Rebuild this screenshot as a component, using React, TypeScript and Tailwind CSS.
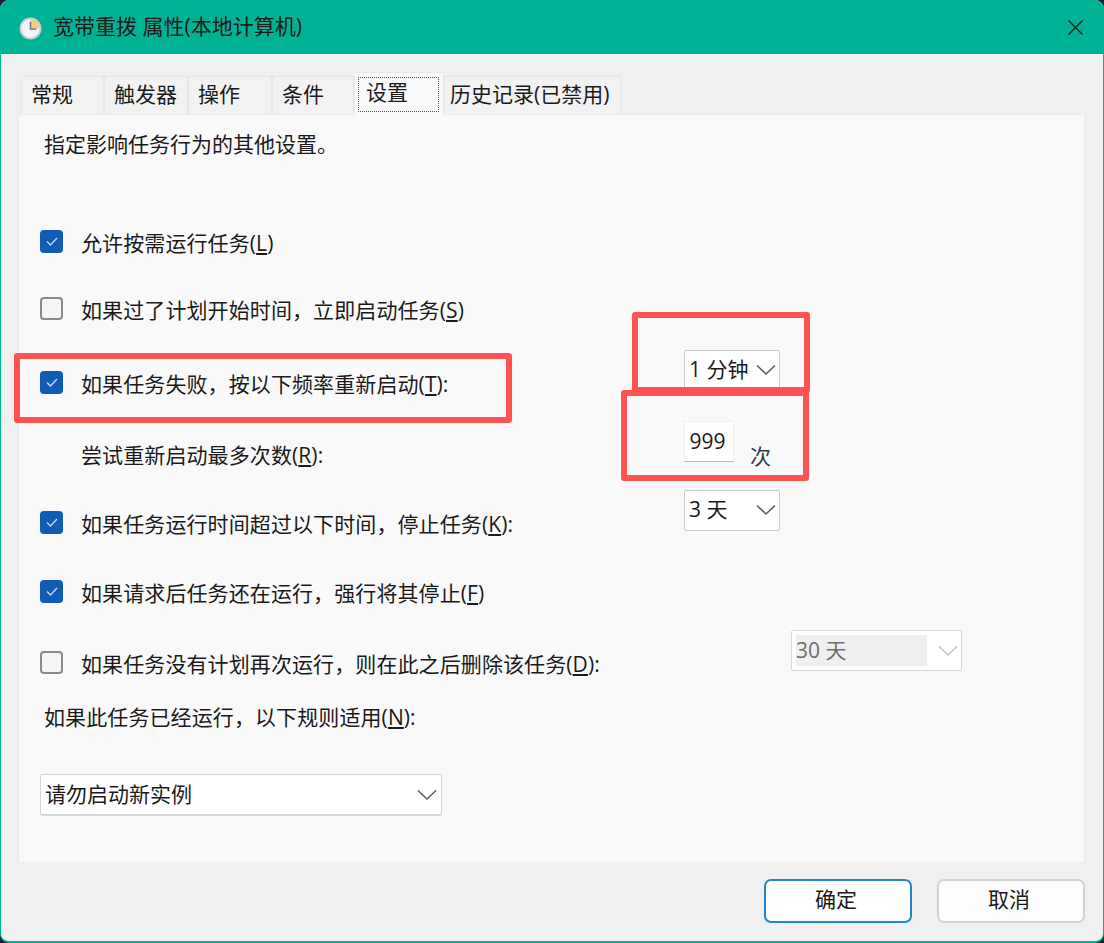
const uiFont = { fontFamily: '"Open Sans","Noto Sans CJK SC",sans-serif' };

const tabs = [
  { label: "常规", width: "w-[83px]" },
  { label: "触发器", width: "w-[84px]" },
  { label: "操作", width: "w-[84px]" },
  { label: "条件", width: "w-[82px]" },
];

function Chevron({ className = "stroke-[#5f5f5f]" }: { className?: string }) {
  return (
    <svg width="20" height="12" viewBox="0 0 20 12" fill="none" className={className} strokeWidth="1.6">
      <path d="M1 1.5 L10 10 L19 1.5" />
    </svg>
  );
}

function CheckBox({ checked }: { checked?: boolean }) {
  return checked ? (
    <span className="flex h-[23px] w-[23px] shrink-0 items-center justify-center rounded-[4px] bg-[#0f5cb4] mb-[6px]">
      <svg width="12" height="9" viewBox="0 0 12 9" fill="none" stroke="#c9daf0" strokeWidth="1.4">
        <path d="M1 4.5 L4.5 8 L11 1" />
      </svg>
    </span>
  ) : (
    <span className="h-[23px] w-[23px] shrink-0 rounded-[4px] border-2 border-[#8a8a8a] bg-[#f5f5f5] mb-[6px]" />
  );
}

function OptionRow({ checked, top, children }: { checked?: boolean; top: string; children: React.ReactNode }) {
  return (
    <div className={`flex h-[40px] items-center gap-[18px] ${top}`}>
      <CheckBox checked={checked} />
      <span className="whitespace-nowrap text-[21px] tracking-[0.1px]">{children}</span>
    </div>
  );
}

function Select({ label, width }: { label: string; width: string }) {
  return (
    <div className={`flex h-[41px] items-center justify-between rounded-[2px] border border-[#c9c9c9] bg-white pb-[1px] pl-[4px] pr-[3px] text-[21px] ${width}`}>
      <span className="whitespace-nowrap">{label}</span>
      <Chevron />
    </div>
  );
}

export default function App() {
  return (
    <div className="h-[943px] w-[1104px] overflow-hidden bg-[#1d2030] text-[#1a1a1a]" style={uiFont}>
      <div className="flex h-full flex-col overflow-hidden rounded-[9px] border-x border-b-2 border-[#00b294] bg-[#f0f0f0]">
        {/* Title bar */}
        <div className="flex h-[54px] shrink-0 items-center bg-[#00b294] pl-[18px] pr-[20px]">
          <svg className="mt-[3px]" width="23" height="23" viewBox="0 0 22 22">
            <circle cx="11" cy="11" r="10.5" fill="#c8ccd2" />
            <circle cx="11" cy="11" r="8.8" fill="#f1f3f6" />
            <path d="M11 2.2 A8.8 8.8 0 0 1 19.8 11 H11 Z" fill="#f2cf7c" />
            <path d="M11 4.5 V11.5 H16.5" fill="none" stroke="#6f7780" strokeWidth="1.5" />
          </svg>
          <span className="ml-[11px] whitespace-nowrap text-[21px]">宽带重拨 属性(本地计算机)</span>
          <svg className="ml-auto" width="15" height="15" viewBox="0 0 15 15" fill="none" stroke="#10201c" strokeWidth="1.4">
            <path d="M0.5 0.5 L14.5 14.5 M14.5 0.5 L0.5 14.5" />
          </svg>
        </div>

        {/* Tabs */}
        <div className="flex h-[60px] shrink-0 items-end pl-[20px]">
          {tabs.map((t) => (
            <div key={t.label} className={`flex h-[38px] items-center border-x border-t border-[#e6e6e6] bg-[#f2f2f2] pb-[2px] pl-[9px] text-[21px] ${t.width}`}>
              {t.label}
            </div>
          ))}
          <div className="relative z-10 -mb-[2px] flex h-[44px] w-[90px] items-start border-x border-t border-[#ebebeb] bg-[#f9f9f9] px-[3px] pt-[4px]">
            <span className="flex h-[35px] w-[81px] border border-dotted border-[#555] pl-[7px] text-[21px] leading-[28px]">设置</span>
          </div>
          <div className="flex h-[38px] w-[177px] items-center whitespace-nowrap border-x border-t border-[#e6e6e6] bg-[#f2f2f2] pb-[2px] pl-[5px] text-[21px]">
            历史记录(已禁用)
          </div>
        </div>

        {/* Settings panel */}
        <div className="relative ml-[17px] mr-[18px] flex h-[749px] shrink-0 border border-[#ebebeb] bg-[#f9f9f9]">
          <div className="w-[665px] shrink-0 pl-[21px]">
            <div className="mt-[10px] flex h-[40px] items-center pl-[4px] text-[21px]">指定影响任务行为的其他设置。</div>
            <OptionRow checked top="mt-[59px]">允许按需运行任务(<u>L</u>)</OptionRow>
            <OptionRow top="mt-[27px]">如果过了计划开始时间，立即启动任务(<u>S</u>)</OptionRow>
            <OptionRow checked top="mt-[34px]">如果任务失败，按以下频率重新启动(<u>T</u>):</OptionRow>
            <div className="mt-[31px] flex h-[40px] items-center pl-[41px] text-[21px] tracking-[0.1px]">尝试重新启动最多次数(<u>R</u>):</div>
            <OptionRow checked top="mt-[29px]">如果任务运行时间超过以下时间，停止任务(<u>K</u>):</OptionRow>
            <OptionRow checked top="mt-[29px]">如果请求后任务还在运行，强行将其停止(<u>F</u>)</OptionRow>
            <OptionRow top="mt-[31px]">如果任务没有计划再次运行，则在此之后删除该任务(<u>D</u>):</OptionRow>
            <div className="mt-[13px] flex h-[40px] items-center pl-[4px] text-[21px] tracking-[0.1px]">如果此任务已经运行，以下规则适用(<u>N</u>):</div>
            <div className="mt-[36px] flex h-[41px] w-[402px] items-center justify-between rounded-[2px] border border-[#d4d4d4] bg-white pl-[4px] pr-[4px] text-[21px] shadow-[0_1px_1px_#d8d8d8]">
              <span>请勿启动新实例</span>
              <Chevron />
            </div>
          </div>

          <div className="flex flex-col items-start pt-[235px]">
            <Select label="1 分钟" width="w-[96px]" />
            <div className="mt-[30px] flex items-start">
              <div className="flex h-[41px] w-[50px] items-center justify-center border border-[#eeeeee] border-b-[#b5b5b5] bg-white pr-[3px] text-[21px]">999</div>
              <span className="ml-[16px] mt-[21px] text-[21px] leading-[28px] text-[#2a3a4a]">次</span>
            </div>
            <div className="mt-[20px]">
              <Select label="3 天" width="w-[96px]" />
            </div>
            <div className="ml-[107px] mt-[99px] flex h-[41px] w-[171px] items-center justify-between rounded-[2px] border border-[#d8d8d8] bg-white pl-[4px] pr-[3px] text-[21px] text-[#6e6e6e]">
              <span className="flex h-[31px] w-[131px] items-center bg-[#efefef]">30 天</span>
              <Chevron className="stroke-[#c4c4c4]" />
            </div>
          </div>

          {/* Red annotation boxes */}
          <div className="absolute left-[-5px] top-[238px] h-[70px] w-[498px] rounded-[3px] border-[6px] border-[#ff5252]" />
          <div className="absolute left-[613px] top-[197px] h-[81px] w-[178px] rounded-[3px] border-[6px] border-[#ff5252]" />
          <div className="absolute left-[602px] top-[275px] h-[91px] w-[188px] rounded-[3px] border-[6px] border-[#ff5252]" />
        </div>

        {/* Footer buttons */}
        <div className="flex flex-1 items-start justify-end gap-[25px] pr-[18px] pt-[16px]">
          <button className="h-[44px] w-[148px] rounded-[7px] border-2 border-[#1f86d6] bg-white pb-[2px] pr-[4px] text-[21px]">确定</button>
          <button className="h-[44px] w-[148px] rounded-[7px] border-2 border-[#d2d2d2] bg-[#fdfdfd] pb-[2px] pr-[4px] text-[21px]">取消</button>
        </div>
      </div>
    </div>
  );
}
